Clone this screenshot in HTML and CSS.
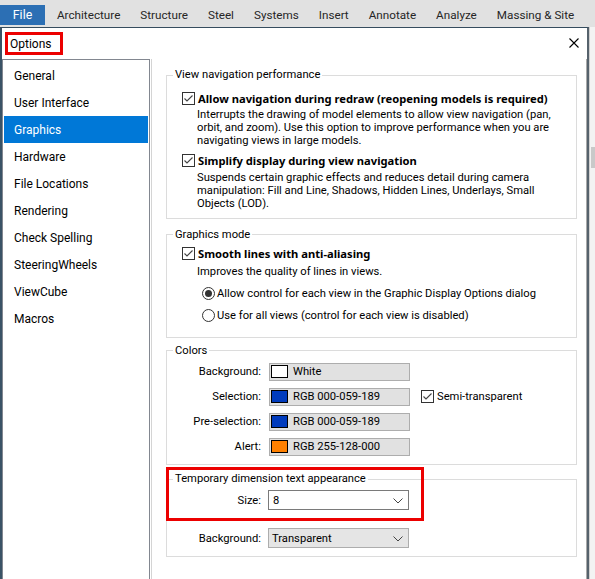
FILE: index.html
```html
<!DOCTYPE html>
<html lang="en">
<head>
    <meta charset="UTF-8">
    <title>Options</title>
    <link rel="stylesheet" href="styles.css">
</head>
<body>
    <header class="ribbon">
        <span class="tab tab-file">File</span>
        <span class="tab">Architecture</span>
        <span class="tab">Structure</span>
        <span class="tab">Steel</span>
        <span class="tab">Systems</span>
        <span class="tab">Insert</span>
        <span class="tab">Annotate</span>
        <span class="tab">Analyze</span>
        <span class="tab">Massing &amp; Site</span>
    </header>

    <div class="workspace">
        <div class="dialog">
            <div class="dialog-title">
                <span class="title-text">Options</span>
                <span class="mark mark-title"></span>
                <svg class="close" width="10" height="10" viewBox="0 0 10 10">
                    <path d="M0.5 0.5 L9.5 9.5 M9.5 0.5 L0.5 9.5" stroke="#000" stroke-width="1.1" fill="none"/>
                </svg>
            </div>

            <div class="dialog-body">
                <ul class="nav">
                    <li>General</li>
                    <li>User Interface</li>
                    <li class="active">Graphics</li>
                    <li>Hardware</li>
                    <li>File Locations</li>
                    <li>Rendering</li>
                    <li>Check Spelling</li>
                    <li>SteeringWheels</li>
                    <li>ViewCube</li>
                    <li>Macros</li>
                </ul>

                <div class="panel">
                    <fieldset class="group group-nav">
                        <legend>View navigation performance</legend>
                        <div class="option">
                            <div class="check-row">
                                <span class="box checked"></span>
                                <b>Allow navigation during redraw (reopening models is required)</b>
                            </div>
                            <p class="desc">Interrupts the drawing of model elements to allow view navigation (pan,<br>orbit, and zoom). Use this option to improve performance when you are<br>navigating views in large models.</p>
                        </div>
                        <div class="option">
                            <div class="check-row">
                                <span class="box checked"></span>
                                <b>Simplify display during view navigation</b>
                            </div>
                            <p class="desc">Suspends certain graphic effects and reduces detail during camera<br>manipulation: Fill and Line, Shadows, Hidden Lines, Underlays, Small<br>Objects (LOD).</p>
                        </div>
                    </fieldset>

                    <fieldset class="group group-mode">
                        <legend>Graphics mode</legend>
                        <div class="option">
                            <div class="check-row">
                                <span class="box checked"></span>
                                <b>Smooth lines with anti-aliasing</b>
                            </div>
                            <p class="desc">Improves the quality of lines in views.</p>
                        </div>
                        <div class="radios">
                            <div class="radio-row"><span class="radio selected"></span>Allow control for each view in the Graphic Display Options dialog</div>
                            <div class="radio-row"><span class="radio"></span>Use for all views (control for each view is disabled)</div>
                        </div>
                    </fieldset>

                    <fieldset class="group group-colors">
                        <legend>Colors</legend>
                        <div class="form-grid colors">
                            <span class="field-label">Background:</span>
                            <span class="color-btn"><span class="swatch swatch-white"></span>White</span>
                            <span></span>

                            <span class="field-label">Selection:</span>
                            <span class="color-btn"><span class="swatch swatch-blue"></span>RGB 000-059-189</span>
                            <span class="check-row semi"><span class="box checked"></span>Semi-transparent</span>

                            <span class="field-label">Pre-selection:</span>
                            <span class="color-btn"><span class="swatch swatch-blue"></span>RGB 000-059-189</span>
                            <span></span>

                            <span class="field-label">Alert:</span>
                            <span class="color-btn"><span class="swatch swatch-orange"></span>RGB 255-128-000</span>
                            <span></span>
                        </div>
                    </fieldset>

                    <fieldset class="group group-temp">
                        <legend>Temporary dimension text appearance</legend>
                        <div class="form-grid temp">
                            <span class="field-label">Size:</span>
                            <span class="select select-white">8<svg class="chevron" width="10" height="6" viewBox="0 0 10 6"><path d="M0.5 0.5 L5 5 L9.5 0.5" stroke="#444" fill="none"/></svg></span>

                            <span class="field-label">Background:</span>
                            <span class="select">Transparent<svg class="chevron" width="10" height="6" viewBox="0 0 10 6"><path d="M0.5 0.5 L5 5 L9.5 0.5" stroke="#444" fill="none"/></svg></span>
                        </div>
                    </fieldset>

                    <span class="mark mark-temp"></span>
                </div>
            </div>
        </div>

        <div class="app-edge">
            <span class="edge-bar"></span>
        </div>
    </div>
</body>
</html>
```

FILE: styles.css
```css
* {
    box-sizing: border-box;
}

body {
    margin: 0;
    width: 595px;
    height: 579px;
    overflow: hidden;
    font-family: Roboto, "Noto Sans", sans-serif;
    font-size: 11.2px;
    color: #000;
    background-color: #f0f0f0;
}

b {
    font-family: "Noto Sans", sans-serif;
    font-weight: bold;
}

/* ribbon */
.ribbon {
    height: 27px;
    display: flex;
    align-items: flex-end;
    padding-bottom: 2px;
    background-color: #e1e1e1;
}

.tab {
    flex-shrink: 0;
    font-size: 11.7px;
    line-height: 20px;
    padding: 0 10px;
    color: #262626;
    white-space: nowrap;
}

.tab-file {
    width: 45px;
    margin-right: 2px;
    padding: 0;
    font-size: 12.4px;
    text-align: center;
    background-color: #2c6fb4;
    color: #fff;
}

/* dialog */
.workspace {
    display: flex;
    height: 552px;
}

.dialog {
    width: 589px;
    flex-shrink: 0;
    display: flex;
    flex-direction: column;
    background-color: #fff;
    border-top: 1px solid #354c5e;
    border-left: 2px solid #3a5366;
    border-right: 2px solid #56626c;
}

.dialog-title {
    position: relative;
    height: 31px;
    flex-shrink: 0;
    display: flex;
    align-items: center;
    justify-content: space-between;
    padding: 0 8px;
    font-size: 12px;
}

.close {
    margin-top: -2px;
}

.dialog-body {
    flex: 1;
    display: flex;
    min-height: 0;
}

.nav {
    width: 148px;
    flex-shrink: 0;
    margin: 0;
    padding: 2px 1px;
    list-style: none;
    font-size: 12px;
    border: 1px solid #828790;
    border-bottom: none;
}

.nav li {
    height: 27px;
    line-height: 28px;
    padding-left: 10px;
}

.nav li.active {
    background-color: #0078d7;
    color: #fff;
}

.panel {
    position: relative;
    flex: 1;
    margin-left: 1px;
    padding: 8px 9px 0 14px;
    border-left: 1px solid #d4d4d4;
    border-right: 1px solid #a9a9a9;
}

/* group boxes */
.group {
    margin: 0 0 8px;
    padding: 0 8px 8px 6px;
    border: 1px solid #dcdcdc;
}

.group legend {
    line-height: 16px;
    padding: 0 2px;
}

.group-nav .option:first-of-type {
    margin-top: 7px;
}

.group-nav .option + .option {
    margin-top: 5.5px;
}

.group-mode {
    margin-bottom: 5px;
}

.group-mode .option {
    margin-top: 3px;
}

.group-mode .desc {
    margin-top: 3px;
}

.group-colors {
    margin-bottom: 6px;
    padding-bottom: 8.5px;
}

.option {
    padding-left: 9px;
}

.check-row {
    display: flex;
    align-items: center;
    gap: 3px;
    height: 16px;
    white-space: nowrap;
}

.desc {
    margin: 2px 0 0 15px;
    line-height: 13px;
    white-space: nowrap;
}

.box {
    width: 13px;
    height: 13px;
    flex-shrink: 0;
    border: 1px solid #333;
    background: #fff;
}

.box.checked {
    background: #fff url("data:image/svg+xml,%3Csvg xmlns='http://www.w3.org/2000/svg' width='11' height='11' viewBox='0 0 11 11'%3E%3Cpath d='M1.5 5.5 L4 8 L9.5 2.5' stroke='%23444' stroke-width='1.1' fill='none'/%3E%3C/svg%3E") center / 11px 11px no-repeat;
}

.radios {
    padding: 8px 0 5px 29px;
    display: flex;
    flex-direction: column;
    gap: 6px;
}

.radio-row {
    display: flex;
    align-items: center;
    gap: 2px;
    height: 16px;
    white-space: nowrap;
}

.radio {
    width: 13px;
    height: 13px;
    flex-shrink: 0;
    border: 1px solid #333;
    border-radius: 50%;
    display: flex;
    align-items: center;
    justify-content: center;
}

.radio.selected::after {
    content: "";
    width: 7px;
    height: 7px;
    border-radius: 50%;
    background-color: #333;
}

/* label / control grids */
.form-grid {
    display: grid;
    grid-template-columns: 88px 141px auto;
    column-gap: 8px;
    align-items: center;
}

.colors {
    margin-top: 4px;
    row-gap: 7px;
}

.temp {
    margin-top: 3px;
    row-gap: 18px;
    grid-template-columns: 88px 141px;
    column-gap: 7px;
}

.field-label {
    text-align: right;
    white-space: nowrap;
}

.color-btn {
    height: 18px;
    display: flex;
    align-items: center;
    gap: 5px;
    padding-left: 1px;
    background-color: #e1e1e1;
    border: 1px solid #adadad;
    white-space: nowrap;
}

.swatch {
    width: 17px;
    height: 13px;
    border: 1px solid #000;
}

.swatch-white { background-color: #fff; }
.swatch-blue { background-color: #003bbd; }
.swatch-orange { background-color: #ff8000; }

.semi {
    padding-left: 3px;
}

.select {
    position: relative;
    height: 20px;
    display: flex;
    align-items: center;
    padding-left: 3px;
    background-color: #e5e5e5;
    border: 1px solid #adadad;
}

.select-white {
    padding-left: 4px;
    background-color: #fff;
    border-color: #7a7a7a;
}

.chevron {
    position: absolute;
    right: 5px;
    top: 7px;
}

/* red call-out boxes */
.mark {
    position: absolute;
    border: 3px solid #ec0000;
}

.mark-title {
    left: 3px;
    top: 4px;
    width: 58px;
    height: 23px;
}

.mark-temp {
    left: 14px;
    top: 408px;
    width: 258px;
    height: 54px;
}

/* bit of the main window behind the dialog */
.app-edge {
    flex: 1;
    position: relative;
    background-color: #f3f3f3;
    border-left: 1px solid #cfcfcf;
}

.edge-bar {
    position: absolute;
    left: 1px;
    right: 0;
    top: 120px;
    height: 21px;
    background-color: #c9c9c9;
}
```
